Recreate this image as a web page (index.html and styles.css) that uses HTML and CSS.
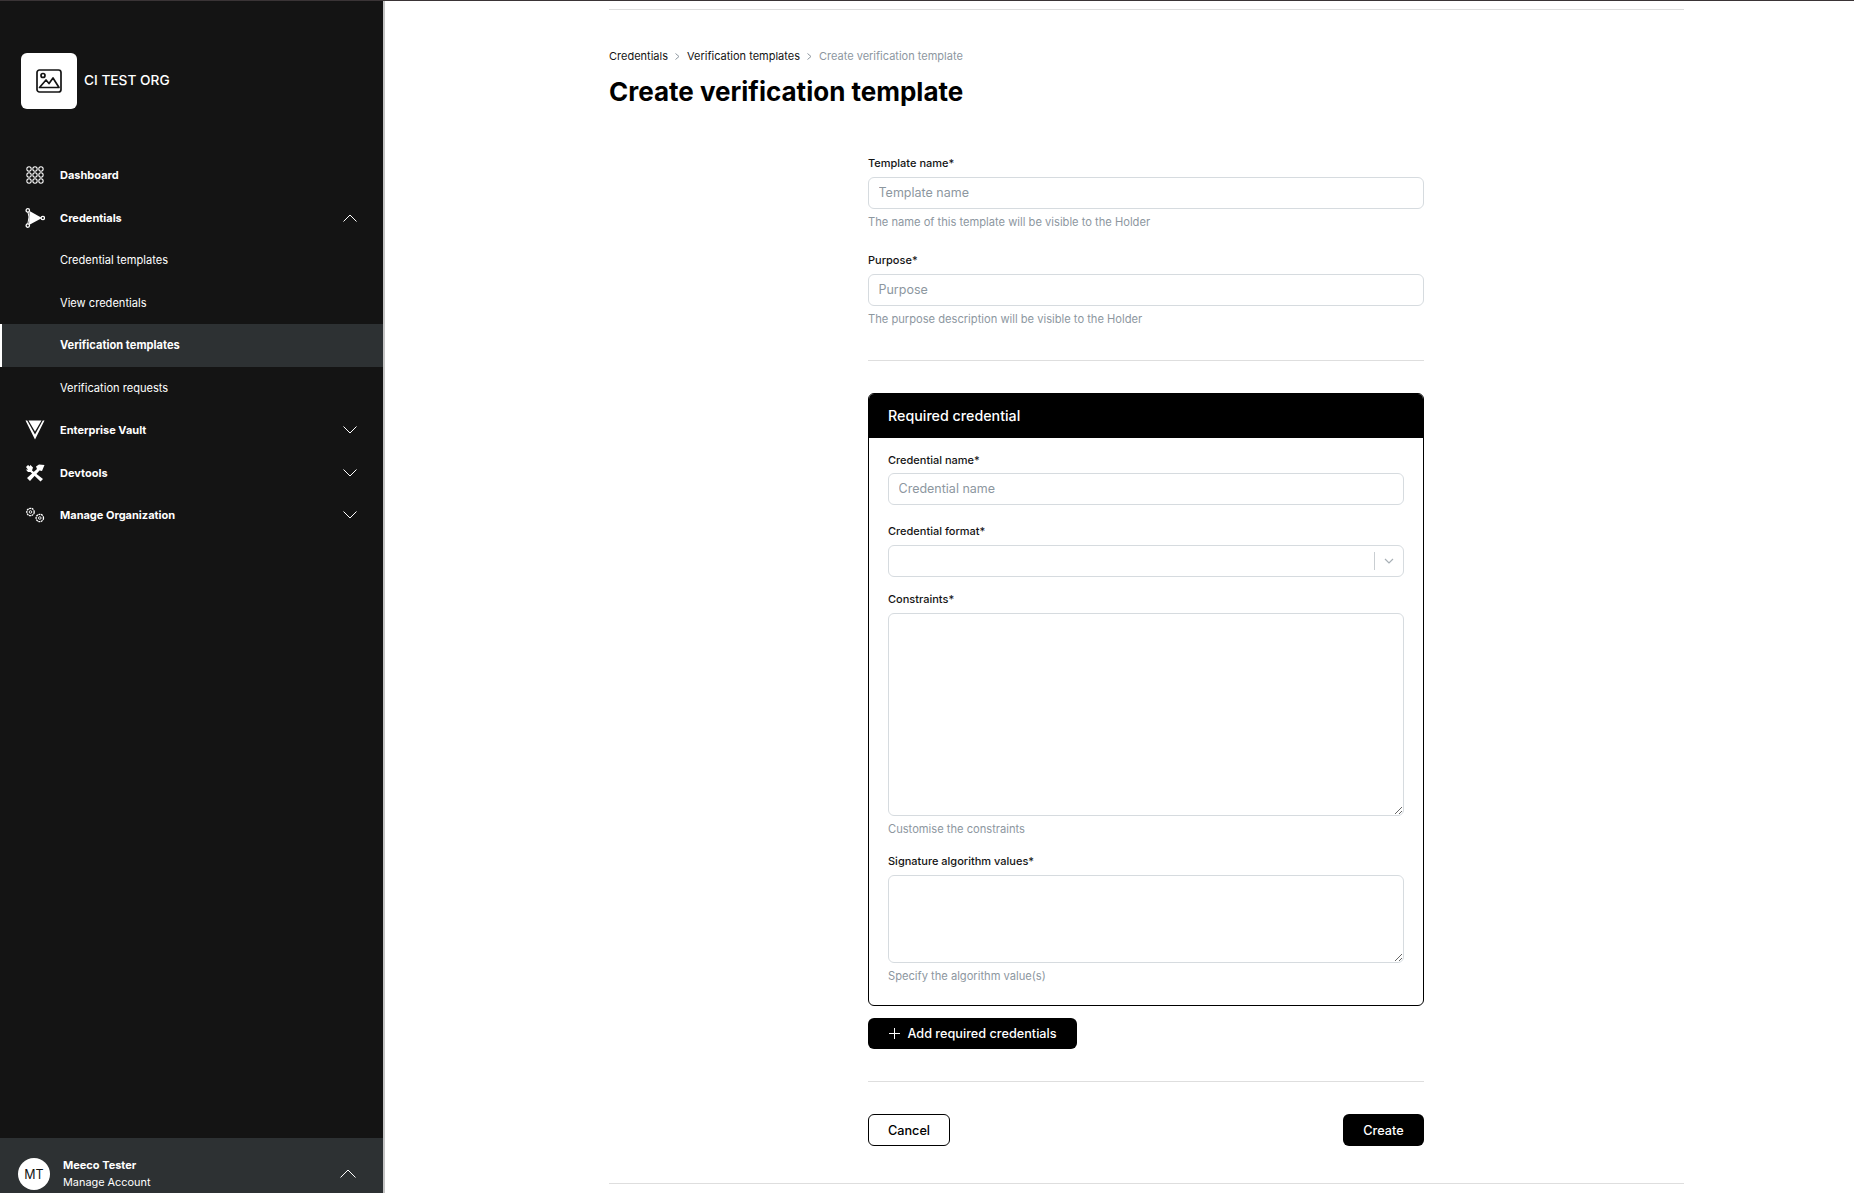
FILE: index.html
```html
<!DOCTYPE html>
<html lang="en">
<head>
<meta charset="utf-8">
<title>Create verification template</title>
<link rel="stylesheet" href="styles.css">
</head>
<body>
<div class="app">
  <aside class="sidebar">
    <div class="org">
      <div class="org-logo">
        <svg width="26" height="24" viewBox="0 0 26 24" fill="none" stroke="#141414" stroke-width="1.7"><rect x="1" y="1" width="24" height="22" rx="2.5"/><circle cx="7" cy="6.5" r="2"/><path d="M3.5 18.5 L10 11 L13 14.5 L17 9 L23 18.5 Z" stroke-linejoin="round"/></svg>
      </div>
      <span class="org-name">CI TEST ORG</span>
    </div>
    <nav class="nav">
      <a class="nav-item">
        <svg class="nav-icon icon-grid" width="19" height="19" viewBox="0 0 19 19" fill="none" stroke="#fff" stroke-width="1.1"><circle cx="3.2" cy="3.2" r="2.3"/><circle cx="9.5" cy="3.2" r="2.3"/><circle cx="15.8" cy="3.2" r="2.3"/><circle cx="3.2" cy="9.5" r="2.3"/><circle cx="9.5" cy="9.5" r="2.3"/><circle cx="15.8" cy="9.5" r="2.3"/><circle cx="3.2" cy="15.8" r="2.3"/><circle cx="9.5" cy="15.8" r="2.3"/><circle cx="15.8" cy="15.8" r="2.3"/></svg>
        <span>Dashboard</span>
      </a>
      <a class="nav-item">
        <svg class="nav-icon" width="20" height="20" viewBox="0 0 20 20"><path d="M4.5 3 L4 17 L17 10 Z" fill="#fff"/><path d="M2.5 2 L4 9 L2.5 18" fill="none" stroke="#fff"/><circle cx="2.8" cy="2.4" r="1.7" fill="#141414" stroke="#fff" stroke-width="1.3"/><circle cx="2.8" cy="17.6" r="1.7" fill="#141414" stroke="#fff" stroke-width="1.3"/><circle cx="17.8" cy="10" r="1.7" fill="#141414" stroke="#fff" stroke-width="1.3"/></svg>
        <span>Credentials</span>
        <svg class="chev" width="14" height="8" viewBox="0 0 14 8" fill="none" stroke="#fff"><path d="M0.5 7.5 L7 1 L13.5 7.5"/></svg>
      </a>
      <a class="nav-item sub">Credential templates</a>
      <a class="nav-item sub">View credentials</a>
      <a class="nav-item sub active">Verification templates</a>
      <a class="nav-item sub">Verification requests</a>
      <a class="nav-item">
        <svg class="nav-icon" width="20" height="20" viewBox="0 0 20 20"><path d="M3.5 0.5 H16.5 L10 11.5 Z" fill="#fff"/><path d="M0.5 0.5 H2.2 L10 14.5 L17.8 0.5 H19.5 L10 19.5 Z" fill="#fff"/></svg>
        <span>Enterprise Vault</span>
        <svg class="chev" width="14" height="8" viewBox="0 0 14 8" fill="none" stroke="#fff"><path d="M0.5 0.5 L7 7 L13.5 0.5"/></svg>
      </a>
      <a class="nav-item">
        <svg class="nav-icon" width="20" height="18" viewBox="0 0 20 18" fill="#fff"><path d="M2 14 L12 5 L11 2.5 L14 0.5 L19.5 1 L17 7 L14.5 6.5 L5 17 Z"/><path d="M1 3 L3 1 L5 2.5 L5.2 0.8 L8 3.5 L7 6.5 L18 15 L15.5 17.5 L5.5 8 L3 8 L0.8 5.5 L3 5.8 Z"/></svg>
        <span>Devtools</span>
        <svg class="chev" width="14" height="8" viewBox="0 0 14 8" fill="none" stroke="#fff"><path d="M0.5 0.5 L7 7 L13.5 0.5"/></svg>
      </a>
      <a class="nav-item">
        <svg class="nav-icon" width="20" height="16" viewBox="0 0 20 16" fill="none" stroke="#fff"><circle cx="5.5" cy="5" r="3.7" stroke-width="1.3" stroke-dasharray="2 .6"/><circle cx="5.5" cy="5" r="1.3" stroke-width=".9"/><circle cx="14.8" cy="11" r="3.7" stroke-width="1.3" stroke-dasharray="2 .6"/><circle cx="14.8" cy="11" r="1.3" stroke-width=".9"/></svg>
        <span>Manage Organization</span>
        <svg class="chev" width="14" height="8" viewBox="0 0 14 8" fill="none" stroke="#fff"><path d="M0.5 0.5 L7 7 L13.5 0.5"/></svg>
      </a>
    </nav>
    <div class="account">
      <div class="avatar">MT</div>
      <div class="account-text">
        <strong>Meeco Tester</strong>
        <span>Manage Account</span>
      </div>
      <svg class="account-chev" width="16" height="9" viewBox="0 0 16 9" fill="none" stroke="#fff"><path d="M0.5 8.5 L8 1 L15.5 8.5"/></svg>
    </div>
  </aside>
  <main class="main">
    <div class="content">
      <ol class="crumbs">
        <li>Credentials</li>
        <li class="sep"><svg width="5" height="7" viewBox="0 0 5 7" fill="none" stroke="#8d979f"><path d="M0.5 0.5 L4 3.5 L0.5 6.5"/></svg></li>
        <li>Verification templates</li>
        <li class="sep"><svg width="5" height="7" viewBox="0 0 5 7" fill="none" stroke="#8d979f"><path d="M0.5 0.5 L4 3.5 L0.5 6.5"/></svg></li>
        <li class="current">Create verification template</li>
      </ol>
      <h1 class="title">Create verification template</h1>
      <form class="form">
        <div class="field first">
          <label class="label">Template name*</label>
          <input class="input" placeholder="Template name">
          <p class="hint">The name of this template will be visible to the Holder</p>
        </div>
        <div class="field second">
          <label class="label">Purpose*</label>
          <input class="input" placeholder="Purpose">
          <p class="hint">The purpose description will be visible to the Holder</p>
        </div>
        <hr class="rule rule-a">
        <section class="card">
          <h2 class="card-head">Required credential</h2>
          <div class="card-body">
            <div class="field f-name">
              <label class="label">Credential name*</label>
              <input class="input" placeholder="Credential name">
            </div>
            <div class="field f-format">
              <label class="label">Credential format*</label>
              <div class="select"><span class="select-bar"></span><svg width="10" height="6" viewBox="0 0 10 6" fill="none" stroke="#a8b0b6" stroke-width="1.2"><path d="M1 1 L5 5 L9 1"/></svg></div>
            </div>
            <div class="field f-constraints">
              <label class="label">Constraints*</label>
              <textarea class="area area-lg"></textarea>
              <p class="hint">Customise the constraints</p>
            </div>
            <div class="field f-sig">
              <label class="label">Signature algorithm values*</label>
              <textarea class="area area-sm"></textarea>
              <p class="hint">Specify the algorithm value(s)</p>
            </div>
          </div>
        </section>
        <button type="button" class="btn btn-add"><svg width="11" height="11" viewBox="0 0 11 11" stroke="#fff"><path d="M5.5 0 V11 M0 5.5 H11"/></svg>Add required credentials</button>
        <hr class="rule rule-b">
        <div class="actions">
          <button type="button" class="btn btn-outline">Cancel</button>
          <button type="button" class="btn btn-create">Create</button>
        </div>
      </form>
      <hr class="rule rule-c">
    </div>
  </main>
</div>
</body>
</html>
```

FILE: styles.css
```css
* { box-sizing: border-box; }
html, body { margin: 0; height: 100%; overflow: hidden; }
body { font-family: Inter, "Noto Sans", sans-serif; color: #000; background: #fff; }

.app { display: flex; height: 1193px; border-top: 1px solid #3a3436; }

.sidebar { width: 385px; flex: none; display: flex; flex-direction: column; background: #141414; border-right: 2px solid #c4c4c4; color: #fff; }
.org { display: flex; align-items: center; gap: 7px; padding: 52px 0 0 21px; }
.org-logo { width: 56px; height: 56px; border-radius: 6px; background: #fff; display: flex; align-items: center; justify-content: center; }
.org-name { font-size: 13.7px; font-weight: 500; margin-bottom: 3px; }

.nav { display: flex; flex-direction: column; margin-top: 45px; }
.nav-item { position: relative; height: 42.5px; display: flex; align-items: center; padding-left: 60px; font-size: 11px; font-weight: 700; }
.nav-item.sub { font-size: 11.1px; font-weight: 400; }
.nav-item.active { background: #2d3133; font-size: 11.1px; font-weight: 700; border-left: 2px solid #fff; padding-left: 58px; }
.nav-icon { position: absolute; left: 25px; top: 50%; transform: translateY(-50%); }
.icon-grid { left: 26px; width: 18px; height: 18px; }
.chev { position: absolute; left: 343px; top: 50%; transform: translateY(-50%); }

.account { margin-top: auto; height: 55px; background: #2d3133; display: flex; align-items: center; padding: 16px 0 0 18px; position: relative; }
.avatar { width: 32px; height: 32px; border-radius: 50%; background: #fff; color: #141414; font-size: 12.5px; display: flex; align-items: center; justify-content: center; flex: none; margin-top: 1px; }
.account-text { margin-left: 13px; display: flex; flex-direction: column; gap: 3px; line-height: 14px; }
.account-text strong { font-size: 11px; font-weight: 700; }
.account-text span { font-size: 10.9px; }
.account-chev { position: absolute; left: 340px; top: 31px; }

.main { flex: 1; min-width: 0; }
.content { width: 1075px; margin-left: 224px; border-top: 1px solid #dedede; margin-top: 8px; padding-top: 38px; }

.crumbs { list-style: none; margin: 0; padding: 0; display: flex; align-items: center; gap: 7px; font-size: 11px; line-height: 17px; color: #141414; }
.crumbs .sep { display: flex; }
.crumbs .current { color: #8d979f; }
.title { margin: 10px 0 0; font-size: 26px; line-height: 34px; font-weight: 700; }

.form { width: 556px; margin: 46px 0 0 259px; }
.field { display: flex; flex-direction: column; }
.label { font-size: 11px; line-height: 16px; font-weight: 500; margin-bottom: 6px; color: #141414; }
.input { width: 100%; height: 32px; border: 1px solid #d6dbdf; border-radius: 6px; padding: 0 9.5px 1px; font: 12.5px Inter, sans-serif; outline: none; background: #fff; }
.input::placeholder { color: #8d979f; opacity: 1; }
.hint { margin: 6px 0 0; font-size: 11.15px; line-height: 14px; color: #8d979f; }
.second { margin-top: 23px; }

.rule { border: 0; border-top: 1px solid #dedede; margin: 0; }
.rule-a { margin-top: 34px; }
.rule-b { margin-top: 32px; }
.rule-c { margin-top: 37px; }

.card { margin-top: 32px; border: 1px solid #000; border-radius: 6px; overflow: hidden; }
.card-head { margin: 0; height: 44px; background: #000; color: #fff; font-size: 14.25px; font-weight: 500; display: flex; align-items: center; padding: 0 0 2px 19px; }
.card-body { padding: 14px 19px 22px; }
.f-name .label { margin-bottom: 5px; }
.f-format { margin-top: 18px; }
.f-constraints { margin-top: 14px; }
.f-sig { margin-top: 17px; }
.select { height: 32px; border: 1px solid #d6dbdf; border-radius: 6px; display: flex; align-items: center; justify-content: flex-end; padding-right: 9px; gap: 9px; }
.select-bar { width: 1px; height: 18px; background: #c9ced2; }
.area { display: block; width: 100%; border: 1px solid #d6dbdf; border-radius: 6px; outline: none; resize: vertical; background: #fff; }
.area-lg { height: 203px; }
.area-sm { height: 88px; }

.btn { border-radius: 6px; height: 32px; font: 500 12.7px Inter, sans-serif; display: inline-flex; align-items: center; justify-content: center; cursor: pointer; padding: 0; }
.btn-add { margin-top: 12px; width: 209px; height: 31px; background: #000; color: #fff; border: 0; gap: 7px; padding-left: 1px; }
.actions { display: flex; justify-content: space-between; margin-top: 32px; }
.btn-outline { width: 82px; background: #fff; color: #000; border: 1px solid #000; }
.btn-create { width: 81px; background: #000; color: #fff; border: 0; }
```
